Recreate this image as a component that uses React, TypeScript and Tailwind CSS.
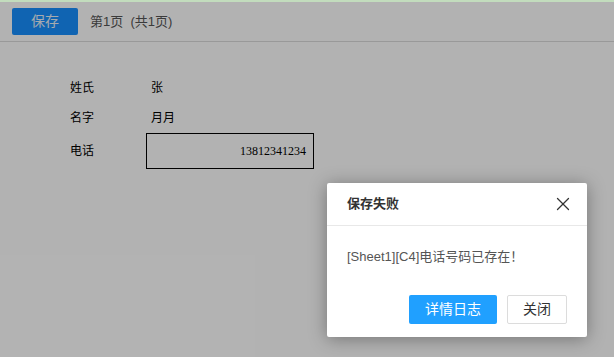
import { X } from "lucide-react";

const rows = [
  { label: "姓氏", value: "张" },
  { label: "名字", value: "月月" },
];

export default function App() {
  return (
    <div className="relative w-[614px] h-[357px] overflow-hidden bg-white font-['Liberation_Sans','Noto_Sans_CJK_SC',sans-serif]">
      <div className="h-[2px]" />
      <div className="h-[40px] flex items-center border-b border-[#dcdcdc] px-3 gap-3">
        <button className="w-[66px] h-[27px] rounded-[2px] bg-[#1890ff] text-[#eef4fa] text-[14px]">保存</button>
        <span className="text-[13px] text-[#555] whitespace-pre">第1页  (共1页)</span>
      </div>

      <div className="pl-[70px] pt-[31px]">
        {rows.map((r) => (
          <div key={r.label} className="flex items-center h-[30px] text-[12px] text-black">
            <span className="w-[76px]">{r.label}</span>
            <span className="pl-[5px]">{r.value}</span>
          </div>
        ))}
        <div className="flex items-center h-[35px] text-[12px] text-black">
          <span className="w-[76px]">电话</span>
          <div className="w-[168px] h-[36px] border border-black flex items-center justify-end pr-[7px] font-['Liberation_Serif',serif] text-[12px]">
            13812341234
          </div>
        </div>
      </div>

      {/* modal mask */}
      <div className="absolute inset-0 bg-black/30" />
      <div className="absolute top-0 left-0 right-0 h-[2px] bg-[#c2dcbd]" />

      <div className="absolute left-[327px] top-[183px] w-[260px] h-[154px] bg-white rounded-[2px] shadow-[0_2px_18px_rgba(0,0,0,0.35)] flex flex-col">
        <div className="h-[43px] flex items-center justify-between pl-[20px] pr-[13px] border-b border-[#e8e8e8]">
          <span className="text-[13px] font-bold text-[#333]">保存失败</span>
          <X size={22} strokeWidth={1.4} className="text-[#333]" />
        </div>
        <div className="pl-[20px] pt-[21px] text-[13px] text-[#555] h-[69px]">
          [Sheet1][C4]电话号码已存在！
        </div>
        <div className="flex justify-end gap-[10px] pr-[20px]">
          <button className="w-[88px] h-[29px] rounded-[2px] bg-[#20a0ff] text-white text-[14px]">详情日志</button>
          <button className="w-[60px] h-[29px] rounded-[2px] border border-[#dcdcdc] bg-white text-[#333] text-[14px]">关闭</button>
        </div>
      </div>
    </div>
  );
}
